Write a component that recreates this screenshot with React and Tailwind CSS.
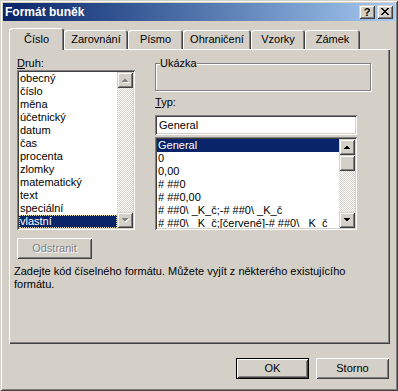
import React from 'react';

// klasické 3D okraje (Windows 2000)
const frame =
  'shadow-[inset_1px_1px_#d4d0c8,inset_-1px_-1px_#404040,inset_2px_2px_#ffffff,inset_-2px_-2px_#808080]';
const pushBtn =
  'shadow-[inset_1px_1px_#ffffff,inset_-1px_-1px_#404040,inset_2px_2px_#d4d0c8,inset_-2px_-2px_#808080]';
const sunken =
  'shadow-[inset_1px_1px_#808080,inset_-1px_-1px_#ffffff,inset_2px_2px_#404040,inset_-2px_-2px_#d4d0c8]';
const checker =
  'bg-[image:repeating-conic-gradient(#ffffff_0%_25%,#d4d0c8_0%_50%)] bg-[length:2px_2px]';

const druh = [
  'obecný',
  'číslo',
  'měna',
  'účetnický',
  'datum',
  'čas',
  'procenta',
  'zlomky',
  'matematický',
  'text',
  'speciální',
  'vlastní'
];

const typ = [
  'General',
  '0',
  '0,00',
  '# ##0',
  '# ##0,00',
  '# ##0\\ _K_č;-# ##0\\ _K_č',
  '# ##0\\ _K_č;[červené]-# ##0\\ _K_č'
];

const tabs = [
  { label: 'Číslo', w: 'w-[55px]', active: true },
  { label: 'Zarovnání', w: 'w-[64px]' },
  { label: 'Písmo', w: 'w-[55px]' },
  { label: 'Ohraničení', w: 'w-[68px]' },
  { label: 'Vzorky', w: 'w-[54px]' },
  { label: 'Zámek', w: 'w-[55px]' }
];

function Arrow({ dir, disabled }) {
  const pts = dir === 'up' ? '4,10 11,10 7.5,6.5' : '4,6 11,6 7.5,9.5';
  return (
    <svg width="16" height="16" viewBox="0 0 16 16" shapeRendering="crispEdges">
      {disabled && (
        <polygon points={pts} fill="#ffffff" transform="translate(1 1)" />
      )}
      <polygon points={pts} fill={disabled ? '#808080' : '#000000'} />
    </svg>
  );
}

function ScrollBar({ disabled, thumb }) {
  return (
    <div className={`flex w-[16px] shrink-0 flex-col ${checker}`}>
      <div className={`h-[16px] bg-[#d4d0c8] ${frame}`}>
        <Arrow dir="up" disabled={disabled} />
      </div>
      {thumb && <div className={`h-[16px] bg-[#d4d0c8] ${frame}`} />}
      <div className="flex-1" />
      <div className={`h-[16px] bg-[#d4d0c8] ${frame}`}>
        <Arrow dir="down" disabled={disabled} />
      </div>
    </div>
  );
}

export default function App() {
  return (
    <div
      className={`flex h-[391px] w-[398px] flex-col bg-[#d4d0c8] p-[3px] font-['Liberation_Sans',Arial,sans-serif] text-[11px] leading-[13px] text-black ${frame}`}
    >
      {/* Titulek */}
      <div className="flex h-[18px] items-center justify-between bg-linear-to-r from-[#0a246a] to-[#a6caf0] pl-[2px] pr-[2px]">
        <span className="text-[12px] font-bold text-white">Formát buněk</span>
        <div className="flex gap-[2px]">
          <div
            className={`flex h-[14px] w-[16px] items-center justify-center bg-[#d4d0c8] text-[11px] font-bold leading-[14px] ${frame}`}
          >
            ?
          </div>
          <div className={`h-[14px] w-[16px] bg-[#d4d0c8] ${frame}`}>
            <svg width="16" height="14" viewBox="0 0 16 14" shapeRendering="crispEdges">
              <path
                fill="#000"
                d="M4 3h2v1H4z M10 3h2v1h-2z M5 4h2v1H5z M9 4h2v1H9z M6 5h4v1H6z M7 6h2v1H7z M6 7h4v1H6z M5 8h2v1H5z M9 8h2v1H9z M4 9h2v1H4z M10 9h2v1h-2z"
              />
            </svg>
          </div>
        </div>
      </div>

      {/* Záložky */}
      <div className="ml-[6px] mr-[5px] mt-[7px] flex flex-col">
        <div className="flex h-[21px] items-end">
          {tabs.map((t) => (
            <div
              key={t.label}
              className={`${t.w} flex items-center justify-center rounded-t-[3px] bg-[#d4d0c8] shadow-[inset_1px_1px_#ffffff,inset_-1px_0_#404040,inset_-2px_0_#808080] ${
                t.active ? 'relative z-10 -mb-[1px] h-[22px]' : 'h-[19px]'
              }`}
            >
              {t.label}
            </div>
          ))}
        </div>

        <div
          className={`flex h-[295px] flex-col px-[5px] pt-[8px] shadow-[inset_1px_1px_#ffffff,inset_-1px_-1px_#404040,inset_-2px_-2px_#808080]`}
        >
          <div className="ml-[3px] flex gap-[20px]">
            {/* Druh */}
            <div className="flex w-[118px] flex-col">
              <div className="h-[13px]">
                <span className="underline">D</span>ruh:
              </div>
              <div className={`flex h-[160px] bg-white p-[2px] ${sunken}`}>
                <div className="flex-1 overflow-hidden">
                  {druh.map((d, i) => (
                    <div
                      key={d}
                      className={`h-[13px] whitespace-nowrap pl-[1px] ${
                        i === druh.length - 1
                          ? 'bg-[#0a246a] text-white outline outline-1 outline-dotted -outline-offset-1 outline-[#e8dc90]'
                          : ''
                      }`}
                    >
                      {d}
                    </div>
                  ))}
                </div>
                <ScrollBar disabled />
              </div>
              <button
                disabled
                className={`mt-[8px] h-[21px] w-[75px] bg-[#d4d0c8] text-[#808080] [text-shadow:1px_1px_#ffffff] ${pushBtn}`}
              >
                Odstranit
              </button>
            </div>

            {/* Ukázka + Typ */}
            <div className="flex flex-col">
              <fieldset className="h-[34px] w-[216px] border border-[#808080] shadow-[inset_1px_1px_#ffffff,1px_1px_#ffffff]">
                <legend className="ml-[4px] bg-[#d4d0c8] leading-[13px]">Ukázka</legend>
              </fieldset>
              <div className="mt-[5px] h-[13px]">
                <span className="underline">T</span>yp:
              </div>
              <div
                className={`mt-[6px] flex h-[20px] w-[202px] items-center bg-white pl-[4px] ${sunken}`}
              >
                General
              </div>
              <div className={`mt-[2px] flex h-[93px] w-[202px] bg-white p-[2px] ${sunken}`}>
                <div className="flex-1 overflow-hidden">
                  {typ.map((t, i) => (
                    <div
                      key={t}
                      className={`h-[13px] whitespace-nowrap pl-[1px] ${
                        i === 0 ? 'bg-[#0a246a] text-white' : ''
                      }`}
                    >
                      {t}
                    </div>
                  ))}
                </div>
                <ScrollBar thumb />
              </div>
            </div>
          </div>

          <p className="mt-[6px] whitespace-nowrap">
            Zadejte kód číselného formátu. Můžete vyjít z některého existujícího
            <br />
            formátu.
          </p>
        </div>
      </div>

      {/* Tlačítka */}
      <div className="mr-[6px] mt-[14px] flex justify-end gap-[7px]">
        <div className="h-[21px] w-[73px] border border-black">
          <button className={`h-full w-full bg-[#d4d0c8] ${pushBtn}`}>OK</button>
        </div>
        <button className={`h-[21px] w-[73px] bg-[#d4d0c8] ${pushBtn}`}>Storno</button>
      </div>
    </div>
  );
}
